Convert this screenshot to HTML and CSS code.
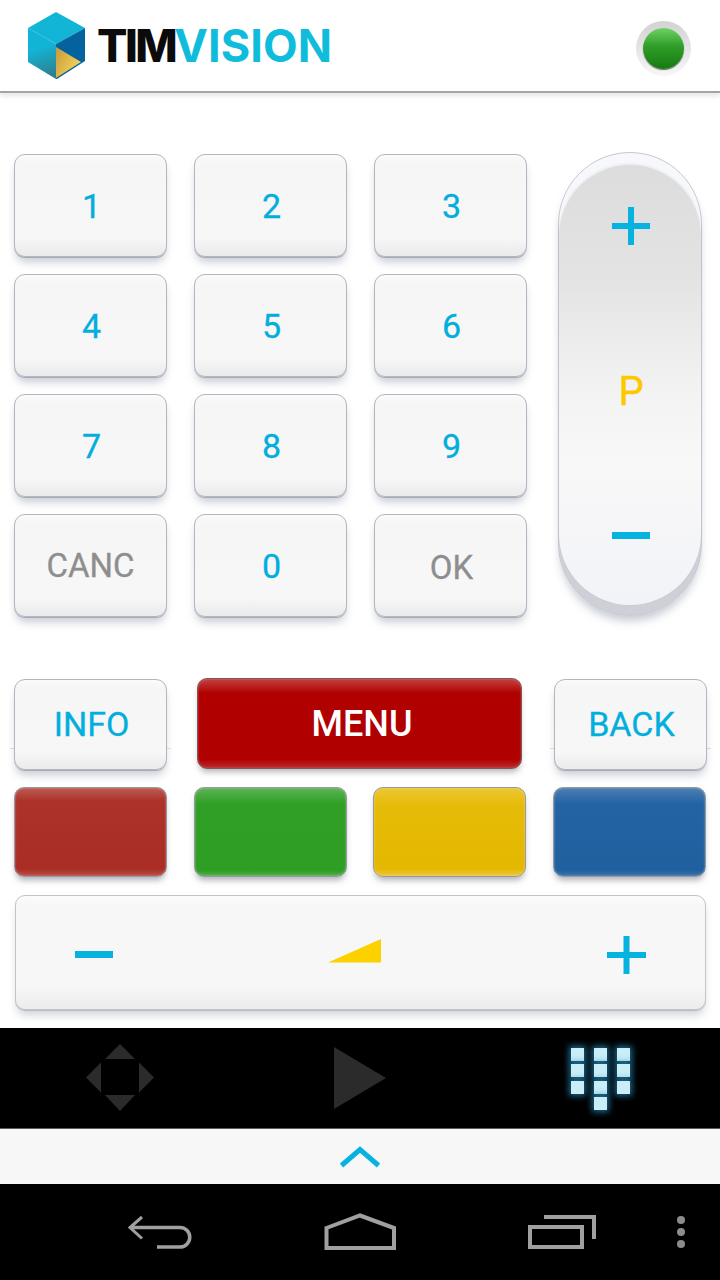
FILE: index.html
```html
<!DOCTYPE html>
<html lang="en">
<head>
    <meta charset="UTF-8">
    <meta name="viewport" content="width=device-width, initial-scale=1.0">
    <title>TIMvision Remote</title>
    <link rel="stylesheet" href="styles.css">
</head>
<body>
    <div class="header">
        <div class="logo">
            <svg class="logo-cube" width="58" height="68" viewBox="28 13 58 68">
                <defs>
                    <linearGradient id="cubeLeft" x1="0.3" y1="0" x2="0.5" y2="1">
                        <stop offset="0.4" stop-color="#12b4d6"/>
                        <stop offset="1" stop-color="#2f7f8e"/>
                    </linearGradient>
                    <linearGradient id="cubeGold" x1="0" y1="0" x2="1" y2="0.6">
                        <stop offset="0" stop-color="#c79a3a"/>
                        <stop offset="1" stop-color="#f6d45e"/>
                    </linearGradient>
                </defs>
                <polygon points="56,13 85,29 56,45 28,29" fill="#13b5d7"/>
                <polygon points="28,29 56,45 56,80 28,63" fill="url(#cubeLeft)"/>
                <polygon points="56,45 85,29 85,62 57,80 56,80" fill="#04639f"/>
                <polygon points="56,48 81,63 56,79" fill="url(#cubeGold)"/>
            </svg>
            <span class="logo-text"><b>TIM</b><span>VISION</span></span>
        </div>
        <div class="status"><div class="status-led"></div></div>
    </div>

    <div class="remote">
        <div class="top-block">
            <div class="keypad">
                <button class="key">1</button>
                <button class="key">2</button>
                <button class="key">3</button>
                <button class="key">4</button>
                <button class="key">5</button>
                <button class="key">6</button>
                <button class="key">7</button>
                <button class="key">8</button>
                <button class="key">9</button>
                <button class="key key-gray">CANC</button>
                <button class="key">0</button>
                <button class="key key-gray key-ok">OK</button>
            </div>
            <div class="pill">
                <div class="pill-face">
                    <svg width="38" height="38" viewBox="0 0 38 38"><path class="sign" d="M16 0h6v16h16v6H22v16h-6V22H0v-6h16z"/></svg>
                    <span class="pill-label">P</span>
                    <svg width="38" height="7" viewBox="0 0 38 7"><rect class="sign" width="38" height="7"/></svg>
                </div>
            </div>
        </div>

        <div class="action-row">
            <button class="key key-action">INFO</button>
            <button class="key-menu">MENU</button>
            <button class="key key-action">BACK</button>
        </div>

        <div class="color-row">
            <button class="color-key red"></button>
            <button class="color-key green"></button>
            <button class="color-key yellow"></button>
            <button class="color-key blue"></button>
        </div>

        <div class="volume">
            <svg width="38" height="7" viewBox="0 0 38 7"><rect class="sign" width="38" height="7"/></svg>
            <svg class="volume-ramp" width="53" height="24" viewBox="0 0 53 24"><polygon points="0,23.500 53,0 53,23.500" fill="#fdd000"/></svg>
            <svg width="39" height="38" viewBox="0 0 39 38"><path class="sign" d="M16.500 0h6v16H39v6H22.500v16h-6V22H0v-6h16.500z"/></svg>
        </div>
    </div>

    <!-- Remote mode tabs -->
    <div class="tabs">
        <div class="tab">
            <svg width="68" height="68" viewBox="0 0 68 68">
                <g fill="#2b2b2b">
                    <polygon points="34,0 49,15 19,15"/>
                    <polygon points="0,33.500 15,18.500 15,48.500"/>
                    <polygon points="68,33.500 53,18.500 53,48.500"/>
                    <polygon points="34,67 49,51 19,51"/>
                </g>
            </svg>
        </div>
        <div class="tab">
            <svg width="52" height="62" viewBox="0 0 52 62"><polygon points="0,0 52,31 0,62" fill="#2b2b2b"/></svg>
        </div>
        <div class="tab">
            <div class="numpad-icon">
                <i></i><i></i><i></i>
                <i></i><i></i><i></i>
                <i></i><i></i><i></i>
                <i class="numpad-last"></i>
            </div>
        </div>
    </div>

    <div class="drawer">
        <svg width="42" height="22" viewBox="0 0 42 22"><polyline points="2.500,19.500 21,3.500 39.500,19.500" fill="none" stroke="#06b3e0" stroke-width="5"/></svg>
    </div>

    <div class="navbar">
        <svg class="nav-back" width="66" height="34" viewBox="127 1217 66 34">
            <path d="M142 1219 L130 1229.500 L142 1240.500" fill="none" stroke="#a0a0a0" stroke-width="3"/>
            <path d="M130 1229.500 H180 a9.500 9.500 0 0 1 0 19.500 H157" fill="none" stroke="#a0a0a0" stroke-width="3.500"/>
        </svg>
        <svg class="nav-home" width="72" height="38" viewBox="324 1214 72 38">
            <polygon points="326.500,1229 360,1216.500 394,1229 394,1249 326.500,1249" fill="none" stroke="#a0a0a0" stroke-width="4"/>
        </svg>
        <svg class="nav-recent" width="68" height="34" viewBox="528 1218 68 34">
            <rect x="530" y="1230" width="52" height="20" fill="none" stroke="#a0a0a0" stroke-width="4"/>
            <polyline points="544,1220 594,1220 594,1242" fill="none" stroke="#a0a0a0" stroke-width="4"/>
        </svg>
        <div class="nav-dots"><i></i><i></i><i></i></div>
    </div>
</body>
</html>
```

FILE: styles.css
```css
body {
    margin: 0;
    width: 720px;
    height: 1280px;
    overflow: hidden;
    background: #fff;
    font-family: Roboto, "Liberation Sans", sans-serif;
}
button {
    padding: 0;
    font-family: inherit;
    cursor: pointer;
}
svg {
    display: block;
}
.header {
    height: 91px;
    border-bottom: 2px solid #a4a4a4;
    box-shadow: 0 3px 5px rgba(0, 0, 0, 0.1);
    display: flex;
    align-items: center;
    justify-content: space-between;
    padding: 0 29px 0 28px;
}
.logo {
    display: flex;
    align-items: center;
    gap: 11px;
}
.logo-cube {
    margin-top: 1px;
}
.logo-text {
    margin-top: 1px;
    font-family: Inter, sans-serif;
    font-size: 45px;
    line-height: 50px;
    font-weight: 700;
    color: #0fbcdc;
    letter-spacing: 0.1px;
}
.logo-text b {
    font-weight: 800;
    color: #0b0b0b;
    letter-spacing: -2.5px;
    margin-right: -1px;
}
.status {
    width: 55px;
    height: 55px;
    margin-top: 6px;
    border-radius: 50%;
    background: linear-gradient(#d2d2d2, #f7f7f7);
    display: flex;
    align-items: center;
    justify-content: center;
}
.status-led {
    width: 41px;
    height: 41px;
    border-radius: 50%;
    background: linear-gradient(#6fd263, #2f9d28 45%, #177a10);
    box-shadow: 0 1px 1px rgba(0, 0, 0, 0.55);
}
.remote {
    padding: 61px 0 0 14px;
}
.top-block {
    display: flex;
    gap: 31px;
}
.keypad {
    display: grid;
    grid-template-columns: repeat(3, 153px);
    grid-auto-rows: 103px;
    gap: 17px 27px;
}
.key {
    box-sizing: border-box;
    padding-left: 2px;
    border: 1px solid #b3b5c0;
    border-radius: 11px;
    background: linear-gradient(#fbfbfb, #f6f6f6 8%, #f7f7f7 82%, #ececec 97%);
    box-shadow: 0 1px 0 #a9abb6, 0 7px 8px -2px rgba(100, 110, 135, 0.35);
    color: #02aedd;
    font-size: 34px;
    line-height: 1;
    -webkit-text-stroke: 0.3px;
}
.key-gray {
    padding-left: 0;
    color: #8e8e8e;
    font-size: 33px;
}
.key-ok {
    padding-top: 4px;
    padding-left: 2px;
}
.pill {
    box-sizing: border-box;
    width: 144px;
    height: 464px;
    margin-top: -2px;
    padding-top: 12px;
    padding-bottom: 10px;
    border: 1px solid #c6c9d1;
    border-radius: 72px;
    background: linear-gradient(#f7f8fc 50%, #cdd0d7 90%);
    box-shadow: 0 7px 9px -2px rgba(100, 110, 135, 0.35);
}
.pill-face {
    box-sizing: border-box;
    height: 100%;
    padding: 42px 0 66px 2px;
    border-radius: 71px;
    background: linear-gradient(#dcdcdc, #e3e3e3 25%, #f3f3f3 52%, #f8f8f8 68%, #f2f3f8);
    box-shadow: 0 -1px 3px rgba(0, 0, 0, 0.07);
    display: flex;
    flex-direction: column;
    align-items: center;
    justify-content: space-between;
}
.pill-label {
    margin-top: 7px;
    font-size: 40px;
    line-height: 40px;
    color: #fcc900;
    -webkit-text-stroke: 0.4px;
}
.sign {
    fill: #06b3e0;
}
.action-row {
    display: flex;
    align-items: flex-start;
    margin-top: 62px;
}
.key-action {
    position: relative;
    width: 153px;
    height: 91px;
    padding-bottom: 2px;
}
/* little hairline poking out both sides of the button */
.key-action::before {
    content: "";
    position: absolute;
    left: -5px;
    right: -5px;
    top: 68px;
    height: 1px;
    background: #e0e0e0;
    z-index: -1;
}
.key-menu {
    box-sizing: border-box;
    width: 325px;
    height: 91px;
    margin: -1px 32px 0 30px;
    padding-left: 5px;
    border: 1px solid #7d5a5a;
    border-radius: 10px;
    background: linear-gradient(#c44040, #b10000 16%, #b10000 90%, #b92a2a);
    box-shadow: inset 0 0 2px rgba(255, 255, 255, 0.35), 0 5px 6px -2px rgba(90, 90, 100, 0.45);
    color: #fff;
    font-size: 36px;
    font-weight: 500;
    line-height: 1;
}
.color-row {
    display: flex;
    gap: 27px;
    margin-top: 17px;
}
.color-key {
    box-sizing: border-box;
    width: 153px;
    height: 90px;
    border: 1px solid #98989e;
    border-radius: 10px;
    box-shadow: inset 0 0 2px rgba(255, 255, 255, 0.45), 0 5px 6px -2px rgba(90, 95, 115, 0.5);
}
.red {
    background: linear-gradient(#bc5a52, #ac322a 15%, #a92d25 92%, #b85048);
}
.green {
    background: linear-gradient(#5fb257, #2f9f26 18%, #2e9e24 94%, #55ad4d);
}
.yellow {
    background: linear-gradient(#ebc733, #e6bb08 20%, #e4b800 92%, #eac83e);
    margin-left: -1px;
}
.blue {
    background: linear-gradient(#4c7fb2, #2363a3 18%, #20609f 94%, #3f74aa);
}
.volume {
    box-sizing: border-box;
    width: 691px;
    height: 115px;
    margin: 18px 0 0 1px;
    padding: 4px 59px 0;
    border: 1px solid #c3c3c8;
    border-radius: 10px;
    background: linear-gradient(#fbfbfb, #f7f7f7 10%, #f7f7f7 80%, #ededed 98%);
    box-shadow: 0 1px 0 #b9bbc4, 0 7px 8px -2px rgba(100, 110, 135, 0.3);
    display: flex;
    align-items: center;
    justify-content: space-between;
}
.volume-ramp {
    margin: -8px 12px 0 0;
}
.tabs {
    height: 100px;
    margin-top: 18px;
    background: #000;
    border-bottom: 1px solid #5c5c5c;
    display: flex;
    align-items: center;
}
.tab {
    width: 240px;
    display: flex;
    justify-content: center;
}
.numpad-icon {
    display: grid;
    grid-template-columns: repeat(3, 13px);
    grid-auto-rows: 13px;
    gap: 3.500px 10px;
    margin: 2px 0 0 1px;
}
.numpad-icon i {
    background: #c9eef7;
    box-shadow: 0 0 6px 2px rgba(40, 140, 190, 0.75);
}
.numpad-last {
    grid-column: 2;
}
.drawer {
    height: 55px;
    background: #f7f7f7;
    display: flex;
    justify-content: center;
    align-items: center;
}
.navbar {
    height: 96px;
    background: #000;
    display: flex;
    align-items: center;
}
.nav-back {
    margin-left: 127px;
}
.nav-home {
    margin-left: 131px;
}
.nav-recent {
    margin-left: 132px;
}
.nav-dots {
    margin-left: 81px;
    display: flex;
    flex-direction: column;
    gap: 4px;
}
.nav-dots i {
    display: block;
    width: 8px;
    height: 8px;
    border-radius: 50%;
    background: #8c8c8c;
}
```
